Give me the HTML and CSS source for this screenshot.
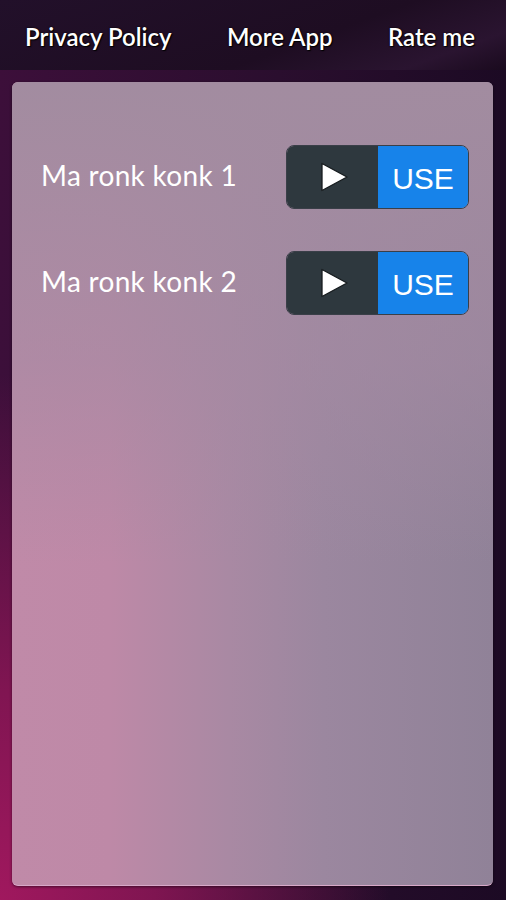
FILE: index.html
```html
<!DOCTYPE html>
<html lang="en">
<head>
    <meta charset="UTF-8">
    <meta name="viewport" content="width=device-width, initial-scale=1.0">
    <title>Ma ronk konk</title>
    <link rel="stylesheet" href="styles.css">
</head>
<body>
    <div class="topbar">
        <a class="top-link">Privacy Policy</a>
        <a class="top-link">More App</a>
        <a class="top-link">Rate me</a>
    </div>

    <div class="panel">
        <div class="row">
            <div class="label">Ma ronk konk 1</div>
            <div class="control">
                <button class="play">
                    <svg width="30" height="30" viewBox="0 0 30 30"><path d="M3 1.5 L28 15 L3 28.5 Z" fill="#fff" stroke="#161b1e" stroke-width="1.3" stroke-linejoin="round"/></svg>
                </button>
                <button class="use">USE</button>
            </div>
        </div>
        <div class="row">
            <div class="label">Ma ronk konk 2</div>
            <div class="control">
                <button class="play">
                    <svg width="30" height="30" viewBox="0 0 30 30"><path d="M3 1.5 L28 15 L3 28.5 Z" fill="#fff" stroke="#161b1e" stroke-width="1.3" stroke-linejoin="round"/></svg>
                </button>
                <button class="use">USE</button>
            </div>
        </div>
    </div>
</body>
</html>
```

FILE: styles.css
```css
html, body {
    height: 100%;
}
body {
    margin: 0;
    font-family: 'Lato', 'DejaVu Sans', sans-serif;
    background:
        radial-gradient(ellipse 520px 700px at 0% 100%, #a0185e 0%, rgba(140, 22, 86, 0.85) 30%, rgba(60, 14, 50, 0) 75%),
        linear-gradient(to right, #3c0f3a 0%, #2a0e2e 55%, #1c0a24 100%);
    overflow: hidden;
}
.topbar {
    height: 70px;
    display: flex;
    align-items: center;
    justify-content: space-between;
    padding: 0 31px 0 25px;
    background: linear-gradient(160deg, #22102a 0%, #1e0d22 60%, #2a1430 85%, #1a0a1e 100%);
}
.top-link {
    color: #fff;
    font-family: 'Lato', 'DejaVu Sans', sans-serif;
    font-size: 24px;
    font-weight: 600;
    text-shadow: 0 0 2px #000, 1px 1px 1px #000;
    padding-top: 3px;
}
.panel {
    margin: 12px 13px 0 12px;
    height: 804px;
    box-sizing: border-box;
    border-radius: 6px;
    border-bottom: 1px solid #d8a8c8;
    box-shadow: 0 1px 3px rgba(0, 0, 0, 0.5);
    padding-top: 63px;
    display: flex;
    flex-direction: column;
    gap: 42px;
    background:
        linear-gradient(to bottom, rgba(162, 140, 160, 1) 0%, rgba(164, 138, 162, 0.6) 35%, rgba(164, 138, 162, 0) 60%),
        linear-gradient(to right, #c08aa8 0%, #be89a7 20%, #a989a3 45%, #9b879f 65%, #908298 100%);
}
.row {
    display: flex;
    align-items: center;
}
.label {
    width: 254px;
    text-align: center;
    color: #fff;
    font-size: 28px;
    letter-spacing: 0.3px;
    padding-bottom: 4px;
}
.control {
    margin-left: 20px;
    display: flex;
    width: 183px;
    height: 64px;
    border-radius: 8px;
    overflow: hidden;
    border: 1px solid #3a3f48;
    box-sizing: border-box;
}
.play {
    width: 91px;
    border: none;
    background: #2e383e;
    display: flex;
    align-items: center;
    justify-content: center;
    padding: 0 0 0 2px;
}
.use {
    flex: 1;
    border: none;
    background: #1783ea;
    color: #fff;
    font-family: 'Liberation Sans', Arial, sans-serif;
    font-size: 30px;
    padding: 4px 0 0 0;
}
```
